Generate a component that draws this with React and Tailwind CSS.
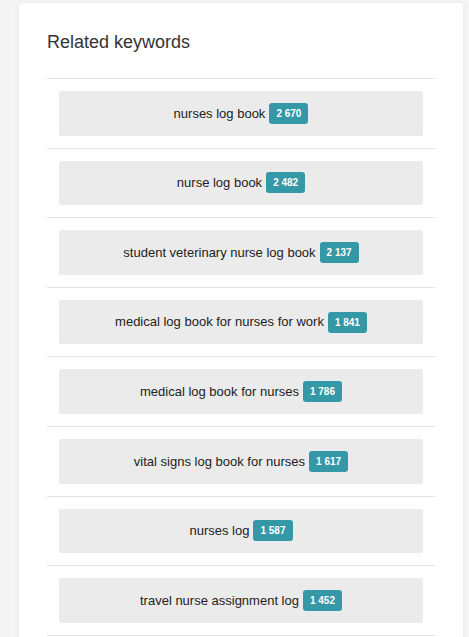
import React from 'react';

const keywords = [
  { text: 'nurses log book', count: '2 670' },
  { text: 'nurse log book', count: '2 482' },
  { text: 'student veterinary nurse log book', count: '2 137' },
  { text: 'medical log book for nurses for work', count: '1 841' },
  { text: 'medical log book for nurses', count: '1 786' },
  { text: 'vital signs log book for nurses', count: '1 617' },
  { text: 'nurses log', count: '1 587' },
  { text: 'travel nurse assignment log', count: '1 452' },
];

const App = () => {
  return (
    <div className="h-screen bg-[#f5f5f5] pt-[3px] overflow-hidden" style={{ fontFamily: '"Liberation Sans", Arial, sans-serif' }}>
      <div className="ml-[19px] w-[444px] min-h-[700px] bg-white rounded-[3px] shadow-[0_0_6px_rgba(0,0,0,0.06)] px-[28px] pt-[28px] pb-6">
        <h2 className="text-[18px] leading-[22px] text-[#333] mb-[25px]">Related keywords</h2>
        <div className="border-b border-[#e3e3e3]">
          {keywords.map((k) => (
            <div key={k.text} className="border-t border-[#e3e3e3] px-3 py-3">
              <div className="h-[44.6px] bg-[#ebebeb] rounded-[2px] flex items-center justify-center text-[13px] text-[#222]">
                <span>{k.text}</span>
                <span className="ml-[4px] inline-block bg-[#3598a7] text-white font-bold text-[10px] leading-[13px] px-[7px] py-[4px] rounded-[3px]">
                  {k.count}
                </span>
              </div>
            </div>
          ))}
        </div>
      </div>
    </div>
  );
};

export default App;
